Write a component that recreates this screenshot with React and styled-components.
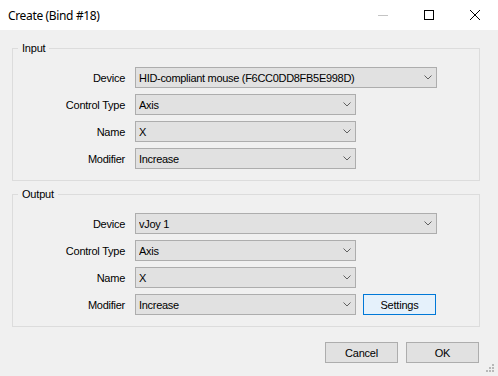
import React from "react";
import styled, { createGlobalStyle } from "styled-components";

const Global = createGlobalStyle`
  html, body { margin: 0; padding: 0; background: #f0f0f0; }
  body { font-family: "Liberation Sans", Arial, sans-serif; }
`;

const Window = styled.div`
  width: 498px;
  height: 376px;
  display: flex;
  flex-direction: column;
  background: #f0f0f0;
  position: relative;
  overflow: hidden;
`;

const TitleBar = styled.div`
  height: 30px;
  background: #ffffff;
  display: flex;
  align-items: center;
  flex-shrink: 0;
`;

const Title = styled.div`
  flex: 1;
  padding-left: 8px;
  font-family: "Noto Sans", "Open Sans", sans-serif;
  font-size: 12px;
  color: #000;
  letter-spacing: -0.35px;
`;

const CaptionButton = styled.div`
  width: 46px;
  height: 30px;
  display: flex;
  align-items: center;
  justify-content: center;
`;

const Body = styled.div`
  flex: 1;
  display: flex;
  flex-direction: column;
  padding: 18px 18px 0 12px;
  gap: 13px;
`;

const GroupBox = styled.div`
  position: relative;
  border: 1px solid #dcdcdc;
  padding: 18px 0 11px 0;
  display: grid;
  grid-template-columns: 112px 1fr;
  column-gap: 10px;
  row-gap: 6px;
  grid-auto-rows: 21px;
`;

const Legend = styled.span`
  position: absolute;
  top: -8px;
  left: 5px;
  padding: 0 4px;
  background: #f0f0f0;
  font-size: 11px;
  line-height: 14px;
  color: #000;
  letter-spacing: -0.2px;
`;

const Label = styled.div`
  font-size: 11px;
  color: #000;
  text-align: right;
  display: flex;
  align-items: center;
  justify-content: flex-end;
  letter-spacing: -0.25px;
  white-space: nowrap;
`;

const Controls = styled.div`
  display: flex;
  align-items: stretch;
  gap: 7px;
`;

const Combo = styled.div`
  box-sizing: border-box;
  width: ${(p) => (p.$wide ? 302 : 221)}px;
  height: 21px;
  background: #e1e1e1;
  border: 1px solid #adadad;
  display: flex;
  align-items: center;
  padding: 0 4px 0 3px;
  font-size: 11px;
  color: #000;
  letter-spacing: -0.3px;
  white-space: nowrap;
`;

const ComboText = styled.span`
  flex: 1;
  overflow: hidden;
`;

const Button = styled.div`
  box-sizing: border-box;
  width: 73px;
  height: 21px;
  background: ${(p) => (p.$focused ? "#e5f1fb" : "#e1e1e1")};
  border: 1px solid ${(p) => (p.$focused ? "#0078d7" : "#adadad")};
  display: flex;
  align-items: center;
  justify-content: center;
  font-size: 11px;
  color: #000;
  letter-spacing: -0.2px;
`;

const ButtonRow = styled.div`
  display: flex;
  justify-content: flex-end;
  gap: 8px;
  margin-top: 2px;
  padding-right: 1px;
`;

const Grip = styled.svg`
  position: absolute;
  right: 2px;
  bottom: 2px;
`;

const Chevron = () => (
  <svg width="8" height="5" viewBox="0 0 8 5">
    <path d="M0.5 0.5 L4 4 L7.5 0.5" fill="none" stroke="#606060" strokeWidth="1" />
  </svg>
);

const Field = ({ label, value, wide, extra }) => (
  <>
    <Label>{label}</Label>
    <Controls>
      <Combo $wide={wide}>
        <ComboText>{value}</ComboText>
        <Chevron />
      </Combo>
      {extra}
    </Controls>
  </>
);

export default function App() {
  return (
    <>
      <Global />
      <Window>
        <TitleBar>
          <Title>Create (Bind #18)</Title>
          <CaptionButton>
            <svg width="10" height="10" viewBox="0 0 10 10">
              <path d="M0 5.5 H10" stroke="#c4c4c4" strokeWidth="1" />
            </svg>
          </CaptionButton>
          <CaptionButton>
            <svg width="10" height="10" viewBox="0 0 10 10">
              <rect x="0.5" y="0.5" width="9" height="9" fill="none" stroke="#000" strokeWidth="1" />
            </svg>
          </CaptionButton>
          <CaptionButton>
            <svg width="10" height="10" viewBox="0 0 10 10">
              <path d="M0 0 L10 10 M10 0 L0 10" stroke="#000" strokeWidth="1" />
            </svg>
          </CaptionButton>
        </TitleBar>
        <Body>
          <GroupBox>
            <Legend>Input</Legend>
            <Field label="Device" value="HID-compliant mouse (F6CC0DD8FB5E998D)" wide />
            <Field label="Control Type" value="Axis" />
            <Field label="Name" value="X" />
            <Field label="Modifier" value="Increase" />
          </GroupBox>
          <GroupBox>
            <Legend>Output</Legend>
            <Field label="Device" value="vJoy 1" wide />
            <Field label="Control Type" value="Axis" />
            <Field label="Name" value="X" />
            <Field
              label="Modifier"
              value="Increase"
              extra={<Button $focused>Settings</Button>}
            />
          </GroupBox>
          <ButtonRow>
            <Button>Cancel</Button>
            <Button>OK</Button>
          </ButtonRow>
        </Body>
        <Grip width="10" height="10" viewBox="0 0 10 10">
          <g fill="#b8b8b8">
            <rect x="6" y="0" width="2" height="2" />
            <rect x="3" y="3" width="2" height="2" />
            <rect x="6" y="3" width="2" height="2" />
            <rect x="0" y="6" width="2" height="2" />
            <rect x="3" y="6" width="2" height="2" />
            <rect x="6" y="6" width="2" height="2" />
          </g>
        </Grip>
      </Window>
    </>
  );
}
